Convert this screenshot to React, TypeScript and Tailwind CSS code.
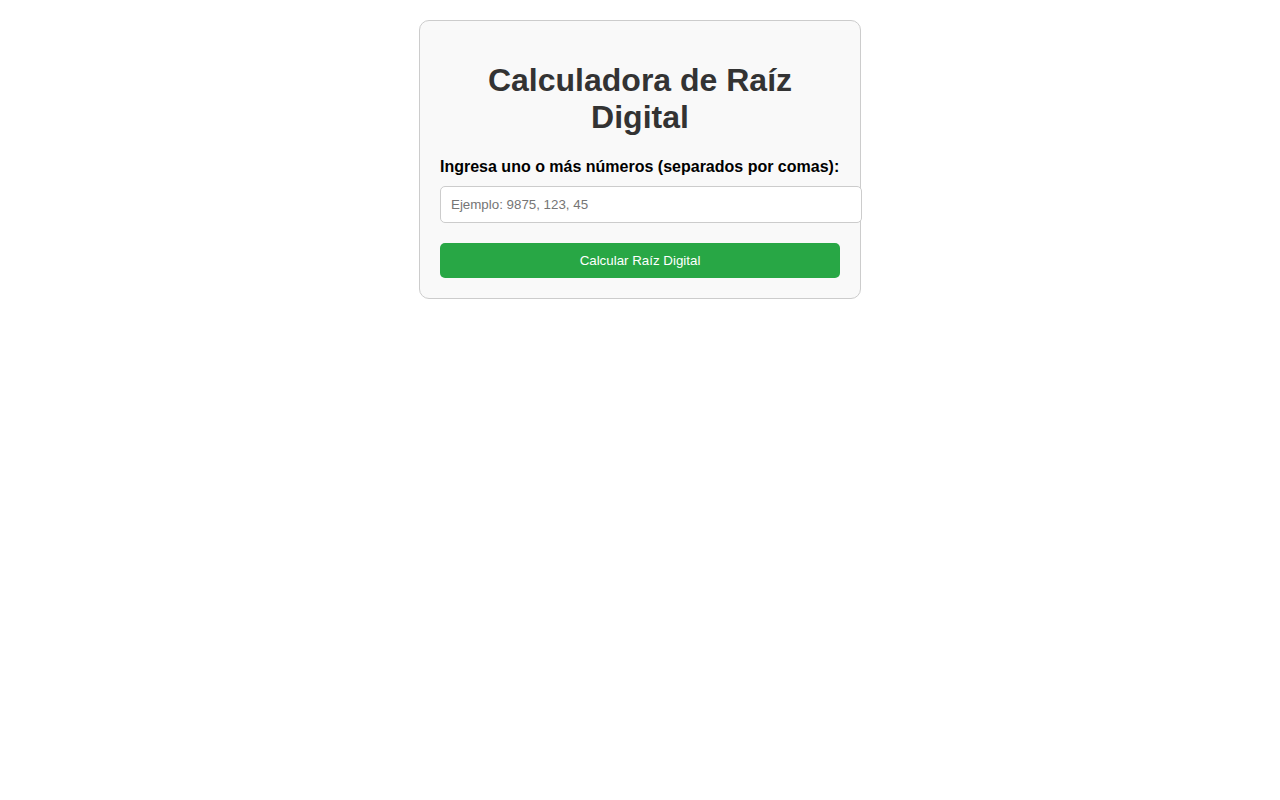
import { useState } from "react";

export default function App() {
  const [value, setValue] = useState("");

  return (
    <div className="min-h-screen bg-white font-['Liberation_Sans',Arial,sans-serif] pt-5">
      <div className="mx-auto w-[442px] rounded-[10px] border border-[#ccc] bg-[#f9f9f9] p-5">
        <h1 className="mt-[21px] mb-[22px] text-center text-[32px] font-bold leading-[37px] text-[#333]">
          Calculadora de Raíz Digital
        </h1>

        <label className="block text-[16px] font-bold leading-[18px] text-black mb-[10px]">
          Ingresa uno o más números (separados por comas):
        </label>
        <input
          type="text"
          value={value}
          onChange={(e) => setValue(e.target.value)}
          placeholder="Ejemplo: 9875, 123, 45"
          className="block h-[37px] w-[422px] rounded-[5px] border border-[#ccc] bg-white px-[10px] text-[13.33px] text-[#333] placeholder:text-[#757575] outline-none"
        />

        <button className="mt-5 block h-[35px] w-full rounded-[5px] bg-[#28a745] text-[13.33px] text-white">
          Calcular Raíz Digital
        </button>
      </div>
    </div>
  );
}
